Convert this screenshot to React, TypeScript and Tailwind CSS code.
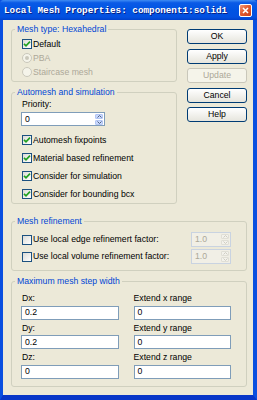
import type React from "react";

const Check: React.FC<{ checked?: boolean }> = ({ checked }) => (
  <span className="w-[10px] h-[10px] shrink-0 border border-[#1c5180] bg-linear-to-br from-[#dcdcd7] to-white flex items-center justify-center">
    {checked && (
      <svg width="8" height="8" viewBox="0 0 8 8">
        <path d="M1 3.8 L3 5.8 L7 1.6" stroke="#21a121" strokeWidth="1.7" fill="none" />
      </svg>
    )}
  </span>
);

const Radio: React.FC<{ selected?: boolean; label: string }> = ({ selected, label }) => (
  <div className="h-[14px] flex items-center gap-[1px] text-[#aca899]">
    <span className="w-[10px] h-[10px] shrink-0 rounded-full border border-[#cac8bb] bg-[#f5f4ea] flex items-center justify-center">
      {selected && <span className="w-[4px] h-[4px] rounded-full bg-[#cac8bb]" />}
    </span>
    <span>{label}</span>
  </div>
);

const CheckRow: React.FC<{ checked?: boolean; label: string }> = ({ checked, label }) => (
  <div className="h-[14px] flex items-center gap-[1px]">
    <Check checked={checked} />
    <span>{label}</span>
  </div>
);

const Arrows: React.FC<{ disabled?: boolean }> = ({ disabled }) => {
  const bg = disabled ? "bg-[#f3f2ec] border-[#e0dfd6]" : "bg-[#c9d8fc] border-[#b3c6f5]";
  const stroke = disabled ? "#cfcdc2" : "#4d6185";
  return (
    <div className="flex flex-col w-[9px] h-full gap-px py-px pr-px">
      <div className={`flex-1 border rounded-[1px] flex items-center justify-center ${bg}`}>
        <svg width="5" height="3" viewBox="0 0 5 3">
          <path d="M0.5 2.5 L2.5 0.5 L4.5 2.5" stroke={stroke} strokeWidth="1" fill="none" />
        </svg>
      </div>
      <div className={`flex-1 border rounded-[1px] flex items-center justify-center ${bg}`}>
        <svg width="5" height="3" viewBox="0 0 5 3">
          <path d="M0.5 0.5 L2.5 2.5 L4.5 0.5" stroke={stroke} strokeWidth="1" fill="none" />
        </svg>
      </div>
    </div>
  );
};

const Field: React.FC<{ value: string }> = ({ value }) => (
  <div className="h-[14px] border border-[#7f9db9] bg-white flex items-center pl-[3px]">{value}</div>
);

const Group: React.FC<{ title: string; className?: string; children: React.ReactNode }> = ({
  title,
  className = "",
  children,
}) => (
  <fieldset className={`border border-[#d0d0bf] rounded-[3px] ${className}`}>
    <legend className="ml-[3px] px-[2px] h-[11px] leading-[11px] text-[#0046d5]">{title}</legend>
    {children}
  </fieldset>
);

const Button: React.FC<{ label: string; disabled?: boolean }> = ({ label, disabled }) => (
  <div
    className={`h-[15px] rounded-[3px] border flex items-center justify-center ${
      disabled
        ? "border-[#c9c7ba] bg-[#f5f4ea] text-[#aca899]"
        : "border-[#003c74] bg-linear-to-b from-white to-[#e6e5dd] text-black"
    }`}
  >
    {label}
  </div>
);

export default function App() {
  return (
    <div className="w-[257px] h-[400px] flex flex-col bg-[#0a4fe0] font-['Liberation_Sans',Tahoma,sans-serif] text-[8.7px] leading-[11px] text-black">
      {/* Title bar */}
      <div className="h-[20px] shrink-0 flex items-center pl-[4px] pr-[5px] bg-[linear-gradient(to_bottom,#3f8cf3_0%,#0a5ae6_14%,#0054e3_50%,#0350e0_85%,#0042cc_100%)] rounded-t-[4px]">
        <span className="flex-1 font-['Liberation_Mono',monospace] font-bold text-[9.3px] text-white whitespace-nowrap [text-shadow:1px_1px_0_#0a1e80]">
          Local Mesh Properties: component1:solid1
        </span>
        <div className="w-[13px] h-[13px] rounded-[2px] border border-white bg-[linear-gradient(135deg,#f39a7c_0%,#e25b2e_45%,#c8401c_100%)] flex items-center justify-center">
          <svg width="7" height="7" viewBox="0 0 7 7">
            <path d="M1 1 L6 6 M6 1 L1 6" stroke="white" strokeWidth="1.6" />
          </svg>
        </div>
      </div>

      {/* Client area */}
      <div className="flex-1 flex flex-col border-l-[3px] border-r-[4px] border-b-[5px] border-l-[#0a4fe0] border-r-[#0a4fe0] border-b-[#0836c8] bg-[#ece9d8] pl-[8px] pr-[6px] pt-[4px]">
        <div className="flex gap-[10px]">
          <div className="w-[166px] flex flex-col">
            <Group title="Mesh type: Hexahedral">
              <div className="pt-[2px] pb-[2px] pl-[10px] flex flex-col">
                <CheckRow checked label="Default" />
                <Radio selected label="PBA" />
                <Radio label="Staircase mesh" />
              </div>
            </Group>

            <Group title="Automesh and simulation" className="mt-[5px]">
              <div className="pt-[1px] pb-[2px] pl-[10px] flex flex-col">
                <div className="h-[11px]">Priority:</div>
                <div className="mt-[2px] -ml-px w-[84px] h-[14px] border border-[#7f9db9] bg-white flex items-center">
                  <span className="flex-1 pl-[3px]">0</span>
                  <Arrows />
                </div>
                <div className="mt-[7px] flex flex-col gap-[4px]">
                  <CheckRow checked label="Automesh fixpoints" />
                  <CheckRow checked label="Material based refinement" />
                  <CheckRow checked label="Consider for simulation" />
                  <CheckRow checked label="Consider for bounding bcx" />
                </div>
              </div>
            </Group>
          </div>

          <div className="w-[60px] mt-[5px] flex flex-col gap-[4.5px]">
            <Button label="OK" />
            <Button label="Apply" />
            <Button label="Update" disabled />
            <Button label="Cancel" />
            <Button label="Help" />
          </div>
        </div>

        <Group title="Mesh refinement" className="mt-[12px]">
          <div className="pt-[5px] pb-[6px] pl-[10px] pr-[15px] flex flex-col gap-[2px]">
            {["Use local edge refinemert factor:", "Use local volume refinement factor:"].map((label) => (
              <div key={label} className="h-[15px] flex items-center">
                <div className="flex-1 flex items-center gap-[1px]">
                  <Check />
                  <span>{label}</span>
                </div>
                <div className="w-[40px] h-[15px] border border-[#c9d3e1] bg-[#f1efe6] flex items-center text-[#aca899]">
                  <span className="flex-1 pl-[3px]">1.0</span>
                  <Arrows disabled />
                </div>
              </div>
            ))}
          </div>
        </Group>

        <Group title="Maximum mesh step width" className="mt-[5px]">
          <div className="pt-[6px] pb-[7px] pl-[9px] pr-[15px] grid grid-cols-2 gap-x-[15px] gap-y-[3px]">
            {[
              ["Dx:", "0.2", "Extend x range", "0"],
              ["Dy:", "0.2", "Extend y range", "0"],
              ["Dz:", "0", "Extend z range", "0"],
            ].map(([a, av, b, bv]) => (
              <div key={a} className="contents">
                <div className="flex flex-col gap-[1.5px]">
                  <div className="h-[11px] pl-px">{a}</div>
                  <Field value={av} />
                </div>
                <div className="flex flex-col gap-[1.5px]">
                  <div className="h-[11px]">{b}</div>
                  <Field value={bv} />
                </div>
              </div>
            ))}
          </div>
        </Group>
      </div>
    </div>
  );
}
